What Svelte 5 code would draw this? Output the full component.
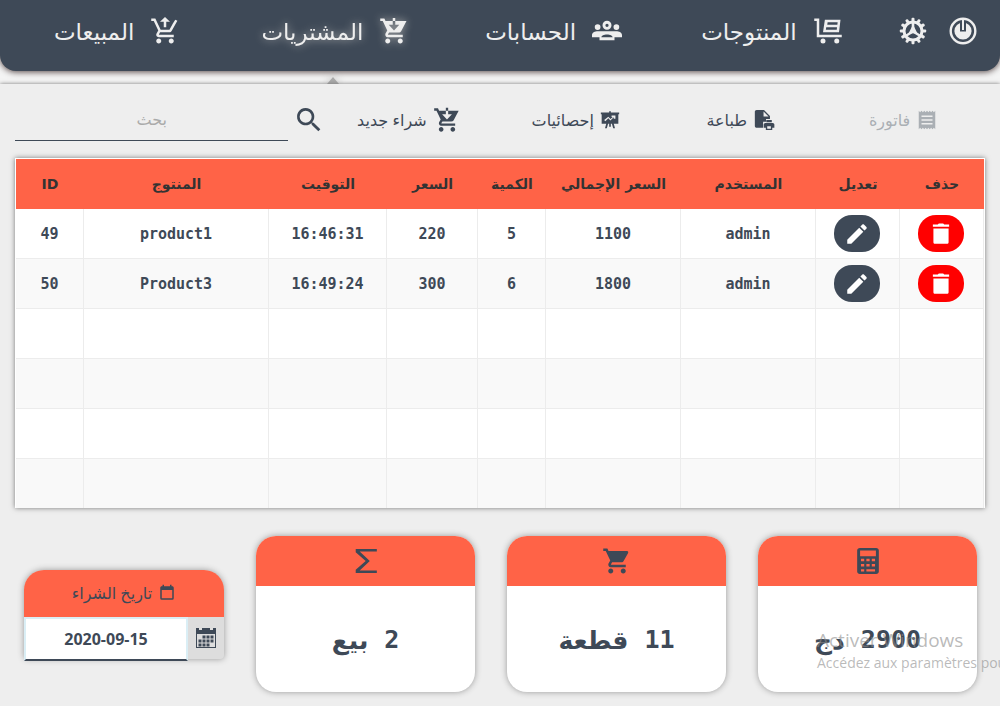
<script>
  const wheels =
    'M7 18c-1.1 0-2 .9-2 2s.9 2 2 2 2-.9 2-2-.9-2-2-2zm10 0c-1.1 0-2 .9-2 2s.9 2 2 2 2-.9 2-2-.9-2-2-2z';
  const basket =
    'M1 2h3.3l.9 2H20c.8 0 1.2.8.9 1.5l-3.6 6.5c-.3.6-1 1-1.7 1H8.1l-.9 1.6c-.1.2 0 .4.2.4H19v2H7c-1.5 0-2.4-1.6-1.8-3l1.4-2.4L3 4H1z';
  const icons = {
    cart: wheels + basket,
    cartUp: wheels + 'M11 9V4.5H8L12 .8l4 3.7h-3V9zM7.17 14.75l.03-.12.9-1.63h7.45c.75 0 1.41-.41 1.75-1.03l4.6-8.1L20.2 2.9l-1.9 3.1-2.75 5H8.53L4.27 2H1v2h2l3.6 7.59-1.35 2.45C4.5 15.4 5.5 17 7 17h12v-2H7.42c-.13 0-.25-.11-.25-.25z',
    cartDown: wheels + 'M1 2h3.3l.9 2H22l-4.3 8.2c-.4.7-1 1-1.900 1H8.100l-.9 1.400c-.1.2 0 .4.2.4H19v2H7c-1.500 0-2.400-1.600-1.800-3l1.400-2.400L3 4H1zM11 1.500h2v5.500h3.200L12 11.500 7.800 7H11z',
    flatbed: 'M1 2h4v13h18v2H3V4H1zM9.500 3H22l-1.200 10H8zM11.700 5l-.3 2H19.500l.2-2zM10.600 9l-.3 2h8.700l.2-2zM8 18a2 2 0 1 0 0 4 2 2 0 0 0 0-4zm11 0a2 2 0 1 0 0 4 2 2 0 0 0 0-4z',
    people: 'M12 1.800a3.600 3.600 0 1 0 0 7.200 3.600 3.600 0 0 0 0-7.200zm0 2.300a1.300 1.300 0 1 1 0 2.600 1.300 1.300 0 0 1 0-2.600zM4.500 4.500a2.300 2.300 0 1 0 0 4.600 2.300 2.300 0 0 0 0-4.600zm15 0a2.300 2.300 0 1 0 0 4.600 2.300 2.300 0 0 0 0-4.600zM0 15v-1.800c0-1.800 2-3 5-3h14c3 0 5 1.200 5 3V15h-6v2.400H6V15zm7.500 0h9c0-1.300-2-2.300-4.500-2.300S7.500 13.700 7.500 15z',
    search: 'M15.500 14h-.79l-.28-.27A6.500 6.500 0 1 0 13.730 14.430l.27.28v.79l5 4.990L20.490 19zm-6 0a4.500 4.500 0 1 1 0-9 4.500 4.500 0 0 1 0 9z',
    trash: 'M5 19.500c0 1.100.7 1.500 1.500 1.500h11c.8 0 1.500-.6 1.500-1.500V7H5zM19.500 3.300h-4.500l-1-1h-4l-1 1H4.500v1.900h15z',
    pencil: 'M3 17.250V21h3.750L17.810 9.940l-3.750-3.750zM20.710 7.040c.39-.39.39-1.020 0-1.410l-2.340-2.340c-.39-.39-1.020-.39-1.410 0l-1.830 1.830 3.750 3.750z',
    receipt: 'M3 22l1.500-1.500L6 22l1.500-1.500L9 22l1.500-1.500L12 22l1.500-1.500L15 22l1.500-1.500L18 22l1.500-1.500L21 22V2l-1.500 1.500L18 2l-1.500 1.500L15 2l-1.500 1.500L12 2l-1.500 1.500L9 2 7.500 3.500 6 2 4.500 3.500 3 2zM6 7h12v1.800H6zm0 4.100h12v1.800H6zm0 4.100h12V17H6z',
    board: 'M1 3h10V1.500h2V3h10v2h-1v11.500h-5.500L18 22h-2.200l-1.500-5.500H13V20h-2v-3.500H9.700L8.200 22H6l1.500-5.500H2V5H1zM5 12l1.400 1.600L10 10l2.500 2.600 4-4v2h2V6.500h-4.600v1.800h1.400l-2.700 2.600L10 8z',
    docPrint: 'M4 1h8l6.500 6.500v3.500h-4.300v3H11v6.500H4c-1.100 0-2-.9-2-2V3c0-1.100.9-2 2-2zm7.500 1.800V8.300H17zM14.500 12h6v2.500h-6zm-1 3.200h8c1 0 1.800.8 1.800 1.800v3.500h-2.300V23h-7v-2.500h-2.300V17c0-1 .8-1.800 1.800-1.800zm2 3.600v2.800h4v-2.800z',
    calendar: 'M19 19H5V8h14M16 1v2H8V1H6v2H5c-1.110 0-2 .89-2 2v14a2 2 0 0 0 2 2h14a2 2 0 0 0 2-2V5c0-1.110-.9-2-2-2h-1V1z',
    sigma: 'M2.500 1H22v2.200H6.200l9.300 8.800-9.300 8.800H22V23H2.500v-3l9.200-8-9.200-8z',
    calculator: 'M4.500 0h15C20.900 0 22 1 22 2.300v19.400c0 1.300-1.100 2.300-2.500 2.300h-15C3.100 24 2 23 2 21.700V2.300C2 1 3.100 0 4.500 0zM4.700 2.400v5.100h14.600V2.400zM5.500 10v2.200h3V10zm5 0v2.200h3V10zm5 0v2.200h3V10zm-10 4.800V17h3v-2.200zm5 0V17h3v-2.200zm5 0V17h3v-2.200zm-10 4.800v2.200h3v-2.200zm5 0v2.200h8v-2.200z',
  };
  const viewBoxes = { people: '0 -2 24 24' };

  const sections = [
    { label: 'المنتوجات', icon: 'flatbed' },
    { label: 'الحسابات', icon: 'people' },
    { label: 'المشتريات', icon: 'cartDown', active: true },
    { label: 'المبيعات', icon: 'cartUp' },
  ];

  const actions = [
    { label: 'فاتورة', icon: 'receipt', size: 22, disabled: true },
    { label: 'طباعة', icon: 'docPrint', size: 22 },
    { label: 'إحصائيات', icon: 'board', size: 20 },
    { label: 'شراء جديد', icon: 'cartDown', size: 28 },
  ];

  const columns = [
    { label: 'ID', key: 'id', share: 68 },
    { label: 'المنتوج', key: 'product', share: 185 },
    { label: 'التوقيت', key: 'time', share: 118 },
    { label: 'السعر', key: 'price', share: 91 },
    { label: 'الكمية', key: 'quantity', share: 68 },
    { label: 'السعر الإجمالي', key: 'total', share: 135 },
    { label: 'المستخدم', key: 'user', share: 135 },
    { label: 'تعديل', key: 'edit', share: 84 },
    { label: 'حذف', key: 'remove', share: 84 },
  ];
  const totalShare = columns.reduce((sum, c) => sum + c.share, 0);

  const purchases = [
    { id: 49, product: 'product1', time: '16:46:31', price: 220, quantity: 5, total: 1100, user: 'admin' },
    { id: 50, product: 'Product3', time: '16:49:24', price: 300, quantity: 6, total: 1800, user: 'admin' },
  ];
  const rows = [...purchases, null, null, null, null];

  const summaries = [
    { icon: 'sigma', value: '2', unit: 'بيع' },
    { icon: 'cart', value: '11', unit: 'قطعة' },
    { icon: 'calculator', value: '2900', unit: 'دج' },
  ];

  const teeth = Array.from({ length: 12 }, (_, i) => i * 30);
  const calendarDots = [
    [8, 9], [12, 9], [16, 9],
    [4, 13], [8, 13], [12, 13], [16, 13],
    [4, 17], [8, 17], [12, 17],
  ];

  let query = $state('');
  let date = $state('2020-09-15');
</script>

{#snippet icon(name, size)}
  <svg width={size} height={size} viewBox={viewBoxes[name] ?? '0 0 24 24'} fill="currentColor" fill-rule="evenodd" aria-hidden="true">
    <path d={icons[name]} />
  </svg>
{/snippet}

<div class="app">
  <header dir="rtl">
    <div class="system">
      <button type="button" aria-label="خروج">
        <svg width="28" height="28" viewBox="0 0 28 28" fill="currentColor" aria-hidden="true">
          <circle cx="14" cy="14" r="12.300" fill="none" stroke="currentColor" stroke-width="2.400" />
          <circle cx="14" cy="14" r="8.600" />
          <rect class="slot" x="11" y="4" width="6" height="10.500" />
          <rect x="13" y="3" width="2" height="10" />
        </svg>
      </button>
      <button type="button" aria-label="إعدادات">
        <svg width="28" height="28" viewBox="0 0 28 28" fill="none" aria-hidden="true">
          {#each teeth as angle}
            <rect x="12.500" y=".8" width="3" height="4.500" rx="1" fill="currentColor" transform="rotate({angle} 14 14)" />
          {/each}
          <circle cx="14" cy="14" r="9" stroke="currentColor" stroke-width="3" />
          <path d="M14 5v9M14 14.500L6.500 19M14 14.500l7.500 4.500" stroke="currentColor" stroke-width="2.600" />
          <path d="M14 7.500l5 10q-5-2.500-10 0z" fill="currentColor" />
        </svg>
      </button>
    </div>
    <nav>
      {#each sections as section}
        <a href="#{section.icon}" class:active={section.active}>
          {@render icon(section.icon, 30)}
          <span>{section.label}</span>
        </a>
      {/each}
    </nav>
  </header>

  <main>
    <div class="toolbar" dir="rtl">
      <div class="actions">
        {#each actions as action}
          <button type="button" disabled={action.disabled}>
            {@render icon(action.icon, action.size)}
            <span>{action.label}</span>
          </button>
        {/each}
      </div>
      <label class="search">
        {@render icon('search', 32)}
        <input type="text" placeholder="بحث" aria-label="بحث" bind:value={query} />
      </label>
    </div>

    <div class="table-frame">
      <table>
        <colgroup>
          {#each columns as column}
            <col style="width: {(column.share / totalShare) * 100}%" />
          {/each}
        </colgroup>
        <thead>
          <tr>
            {#each columns as column}
              <th scope="col">{column.label}</th>
            {/each}
          </tr>
        </thead>
        <tbody>
          {#each rows as row}
            <tr>
              {#each columns as column}
                <td>
                  {#if row && column.key === 'edit'}
                    <button type="button" class="pill" aria-label="تعديل">{@render icon('pencil', 26)}</button>
                  {:else if row && column.key === 'remove'}
                    <button type="button" class="pill danger" aria-label="حذف">{@render icon('trash', 26)}</button>
                  {:else if row}
                    {row[column.key]}
                  {/if}
                </td>
              {/each}
            </tr>
          {/each}
        </tbody>
      </table>
    </div>

    <div class="summary">
      <div class="date-card">
        <label for="date" dir="rtl">
          {@render icon('calendar', 18)}
          <span>تاريخ الشراء</span>
        </label>
        <div class="date-field">
          <input id="date" type="text" bind:value={date} />
          <button type="button" aria-label="التقويم">
            <svg width="20" height="20" viewBox="0 0 20 20" aria-hidden="true">
              <path d="M0 0h3v2h3V0h8v2h3V0h3v20H0zM1 6v13h18V6z" fill="currentColor" fill-rule="evenodd" />
              {#each calendarDots as [x, y]}
                <rect x={x - 1.500} y={y - 1.500} width="3" height="3" fill="currentColor" />
              {/each}
            </svg>
          </button>
        </div>
      </div>
      {#each summaries as card}
        <section class="card">
          <div class="card-head">{@render icon(card.icon, card.icon === 'cart' ? 30 : 26)}</div>
          <p dir="rtl"><span class="number">{card.value}</span><span>{card.unit}</span></p>
        </section>
      {/each}
    </div>
  </main>

  <div class="notice" lang="fr">
    <div class="notice-title">Activer Windows</div>
    <div>Accédez aux paramètres pour activer Windows.</div>
  </div>
</div>

<style>
  :global(body) {
    background: #eee;
  }

  .app {
    --ink: #3e4957;
    --accent: #ff6347;
    position: relative;
    min-height: 100vh;
    overflow: hidden;
    color: var(--ink);
    background: #f4f4f4;
    font-family: 'Open Sans', 'DejaVu Sans', sans-serif;
  }

  * {
    box-sizing: border-box;
  }

  svg {
    display: block;
    flex: none;
  }

  button {
    margin: 0;
    padding: 0;
    border: 0;
    background: none;
    color: inherit;
    font: inherit;
    cursor: pointer;
  }

  header {
    position: relative;
    display: flex;
    align-items: center;
    height: 71px;
    padding: 0 23px 10px 8px;
    border-radius: 0 0 16px 16px;
    background: var(--ink);
    color: #eee;
    box-shadow: 0 1px 6px #544646;
  }

  .slot {
    fill: var(--ink);
  }

  .system {
    display: flex;
    gap: 22px;
    width: 88px;
    margin-left: 8px;
  }

  nav {
    display: grid;
    grid-template-columns: repeat(4, 1fr);
    flex: 1;
  }

  nav a {
    position: relative;
    display: flex;
    align-items: center;
    justify-content: center;
    gap: 16px;
    color: inherit;
    font-size: 23px;
    line-height: 32px;
    text-decoration: none;
  }

  nav a.active {
    filter: drop-shadow(0 0 4px #aaa);
  }

  nav a.active::after {
    content: '';
    position: absolute;
    top: 62px;
    left: calc(50% - 8px);
    border: 6px solid transparent;
    border-top: 0;
    border-bottom: 7px solid #aaa;
  }

  main {
    position: relative;
    margin-top: 13px;
    padding: 14px 15px;
    background: #eee;
    box-shadow: 0 0 4px #777;
  }

  .toolbar {
    display: flex;
    align-items: center;
    height: 43px;
  }

  .actions {
    display: grid;
    grid-template-columns: 163fr 163fr 167fr 167fr;
    flex: 1;
  }

  .actions button {
    display: flex;
    align-items: center;
    justify-content: center;
    gap: 6px;
    font-size: 16px;
    line-height: 24px;
  }

  .actions button:disabled {
    color: #aaafb4;
    cursor: default;
  }

  .search {
    display: flex;
    align-items: center;
    gap: 5px;
    width: 32%;
  }

  .search input {
    flex: 1;
    min-width: 0;
    height: 43px;
    padding: 0;
    border: 0;
    border-bottom: 1px solid var(--ink);
    background: none;
    color: inherit;
    font: 16px 'Open Sans', 'DejaVu Sans', sans-serif;
    text-align: center;
    outline: none;
  }

  .search input::placeholder {
    color: #aaa;
    opacity: 1;
  }

  .table-frame {
    margin-top: 17px;
    border: 1px solid #fff;
    border-bottom: 0;
    background: #fff;
    box-shadow: 0 0 5px #777;
  }

  table {
    width: 100%;
    border-spacing: 0;
    table-layout: fixed;
  }

  th {
    height: 50px;
    padding: 0;
    background: var(--accent);
    color: #333;
    font: 700 14px 'DejaVu Sans', sans-serif;
    white-space: nowrap;
  }

  td {
    height: 50px;
    padding: 0;
    border-right: 1px solid #ececec;
    border-bottom: 1px solid #ececec;
    font: 700 15px 'DejaVu Sans Mono', monospace;
    text-align: center;
  }

  tbody tr:nth-child(even) {
    background: #f9f9f9;
  }

  tbody tr:last-child td {
    height: 49px;
    border-bottom: 0;
  }

  .pill {
    display: inline-flex;
    align-items: center;
    justify-content: center;
    width: 46px;
    height: 37px;
    border-radius: 18px;
    background: var(--ink);
    color: #fff;
    vertical-align: middle;
  }

  .pill.danger {
    background: #f00;
  }

  .summary {
    display: flex;
    align-items: center;
    gap: 32px;
    margin-top: 28px;
    padding: 0 8px 0 9px;
  }

  .date-card {
    width: 200px;
    border-radius: 20px 20px 4px 4px;
    background: #ddd;
    box-shadow: 0 0 6px #999;
  }

  .date-card label {
    display: flex;
    align-items: center;
    justify-content: center;
    gap: 6px;
    height: 47px;
    border-radius: 20px 20px 0 0;
    background: var(--accent);
    font-size: 16px;
  }

  .date-field {
    display: flex;
    height: 42px;
  }

  .date-field input {
    width: 164px;
    height: 44px;
    border: 2px solid #daeef5;
    border-bottom: 2px solid var(--ink);
    background: #fff;
    color: inherit;
    font: 700 16px 'Open Sans', sans-serif;
    text-align: center;
    outline: none;
  }

  .date-field button {
    display: flex;
    flex: 1;
    align-items: center;
    justify-content: center;
  }

  .card {
    flex: 1;
    overflow: hidden;
    border-radius: 20px;
    background: #fff;
    box-shadow: 0 0 6px #999;
  }

  .card-head {
    display: flex;
    align-items: center;
    justify-content: center;
    height: 50px;
    background: var(--accent);
  }

  .card p {
    display: flex;
    align-items: center;
    justify-content: center;
    gap: 16px;
    height: 106px;
    margin: 0;
    font-size: 25px;
    font-weight: 700;
  }

  .number {
    font-family: 'DejaVu Sans Mono', monospace;
  }

  .notice {
    position: absolute;
    top: 627px;
    left: 817px;
    color: rgba(140, 140, 140, 0.6);
    font-size: 14px;
    line-height: 20px;
    white-space: nowrap;
    pointer-events: none;
  }

  .notice-title {
    font-size: 19px;
    line-height: 26px;
  }
</style>
